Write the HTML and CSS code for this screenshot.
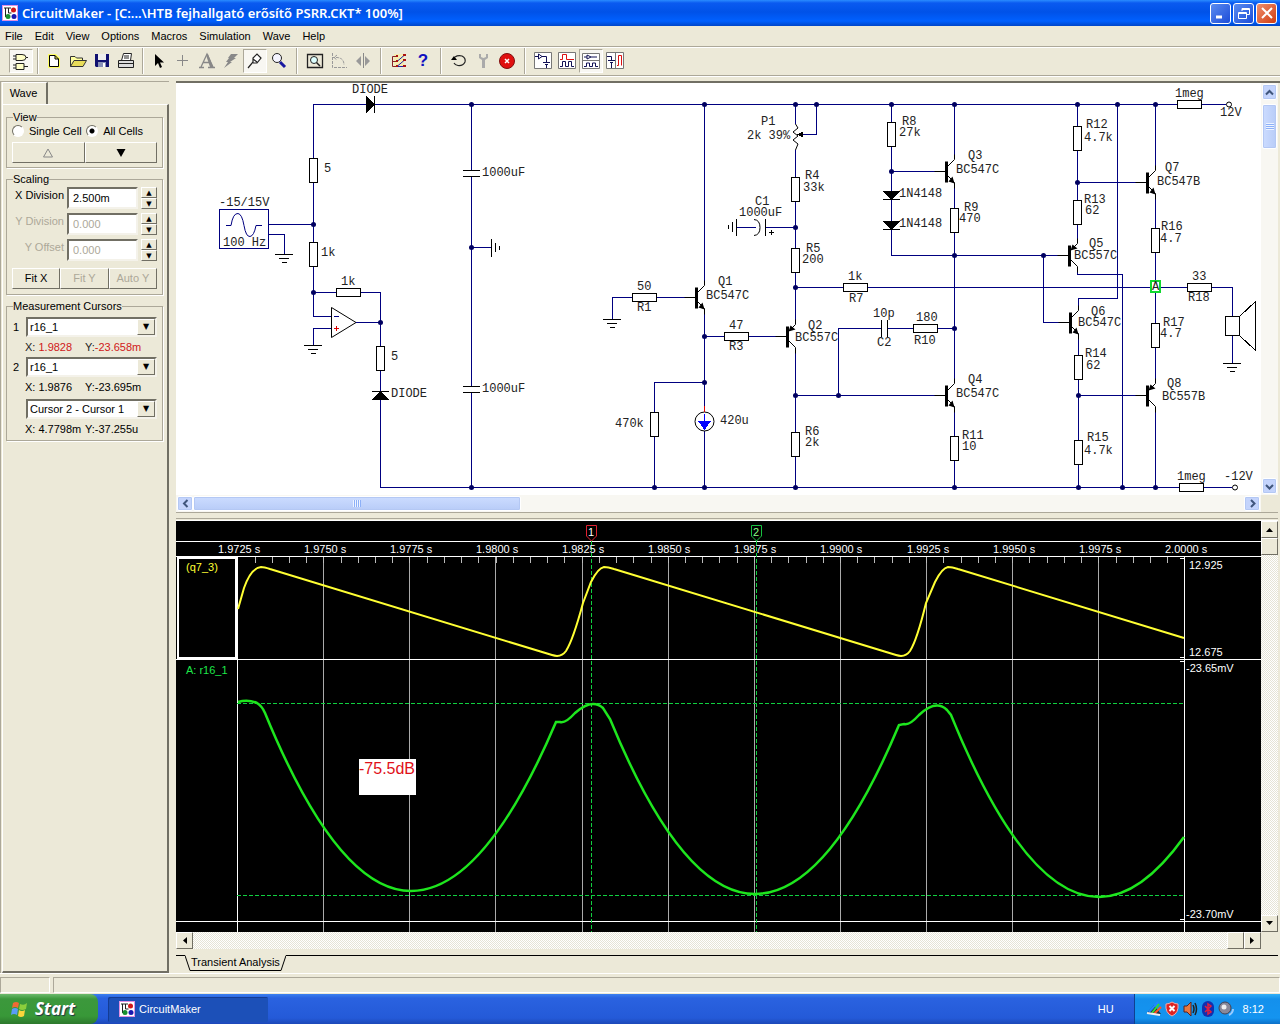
FILE: index.html
```html
<!DOCTYPE html>
<html lang="en">
<head>
<meta charset="utf-8">
<title>CircuitMaker</title>
<link rel="stylesheet" href="styles.css">
</head>
<body>
<svg class="defs" width="0" height="0" aria-hidden="true">
  <defs>
    <g id="rv"><rect x="-4" y="0" width="8" height="24" fill="#fff" stroke="#000"/></g>
    <g id="rh"><rect x="0" y="-4" width="24" height="8" fill="#fff" stroke="#000"/></g>
    <g id="gnd" stroke="#000"><path d="M-9 0H9M-5 4H5M-2 8H3"/></g>
    <g id="npn"><path d="M0-10V11" stroke="#000" stroke-width="3"/><path d="M-12 0H0M8-17V-12L1-5M1 4L8 11V17" stroke="#000" fill="none"/><path d="M8 12L2 10L6 5Z"/></g>
    <g id="pnp"><path d="M0-10V11" stroke="#000" stroke-width="3"/><path d="M-12 0H0M8-17V-12L1-5M1 4L8 11V17" stroke="#000" fill="none"/><path d="M1-5L3-11L8-7Z"/></g>
    <circle id="dot" r="2.5" fill="#000060" shape-rendering="auto"/>
    <g id="app">
      <rect width="16" height="16" fill="#fff"/><rect x=".5" y=".5" width="15" height="15" fill="none" stroke="#e090e0"/>
      <path d="M2 3H9M3.500 3V12M6.500 3V8H9.500" stroke="#222" fill="none"/>
      <circle cx="11.500" cy="5" r="2.500" fill="#d01818"/><circle cx="12" cy="11.500" r="2.500" fill="#1818b0"/><circle cx="6" cy="11.500" r="2.500" fill="#189030"/>
    </g>
  </defs>
</svg>

<header class="titlebar">
  <svg width="16" height="16"><use href="#app"/></svg>
  <h1>CircuitMaker - [C:...\HTB fejhallgató erősítő PSRR.CKT* 100%]</h1>
  <button class="cap" aria-label="Minimize"><svg width="18" height="18"><path d="M4 13H10" stroke="#fff" stroke-width="3"/></svg></button>
  <button class="cap" aria-label="Restore"><svg width="18" height="18"><path d="M7 7V4.500H14.500V10.500H12M3.500 8.500H11.500V14.500H3.500ZM3.500 9.500H11.500M7 5.500H14" stroke="#fff" fill="none"/></svg></button>
  <button class="cap close" aria-label="Close"><svg width="18" height="18"><path d="M4 4L14 14M14 4L4 14" stroke="#fff" stroke-width="2"/></svg></button>
</header>

<nav class="menubar">
  <button>File</button><button>Edit</button><button>View</button><button>Options</button><button>Macros</button><button>Simulation</button><button>Wave</button><button>Help</button>
</nav>

<div class="toolbar">
  <button class="on" aria-label="Parts"><svg width="22" height="22"><path d="M6 4.500H12Q16 4.500 16 7.500T12 10.500H6ZM3 6H6M3 9H6M16 7.500H18" fill="#ffffc8" stroke="#222"/><path d="M6 13.500H14V19.500H6ZM3 15H6M3 18H6M14 16.500H18" fill="#ffffc8" stroke="#222"/></svg></button>
  <span class="sep"></span>
  <button aria-label="New"><svg width="22" height="22"><path d="M5 4H13L17 8V18H5Z" fill="#ff6"/><path d="M6.500 5.500H12L15.500 9V16.500H6.500ZM12 5.500V9H15.500" fill="#fff" stroke="#000"/></svg></button>
  <button aria-label="Open"><svg width="22" height="22"><path d="M3.500 16.500V6.500H8L9.500 8H15.500V10.500" fill="#ffffa0" stroke="#333"/><path d="M3.500 16.500L7 10.500H19.500L16 16.500Z" fill="#e8dc58" stroke="#333"/></svg></button>
  <button aria-label="Save"><svg width="22" height="22"><path d="M4 4H18V17H5L4 16Z" fill="#101070"/><path d="M7 4H15V10H7Z" fill="#eee"/><path d="M7 12H15V17H7Z" fill="#8890b8"/><path d="M12 13H14V17H12Z" fill="#fff"/></svg></button>
  <button aria-label="Print"><svg width="22" height="22"><path d="M6.500 10.500L8.500 3.500H16.500L15.500 10.500M9 6H14M9 8H14" fill="#fff" stroke="#222"/><path d="M3.500 10.500H18.500V17.500H3.500ZM3.500 13.500H18.500" fill="#ddd" stroke="#222"/></svg></button>
  <span class="sep"></span>
  <button aria-label="Arrow"><svg width="22" height="22"><path d="M7 4V16L10 13L12 18L14 17L12 12.500H16Z"/></svg></button>
  <button aria-label="Wire"><svg width="22" height="22"><path d="M10.500 5V16M5 10.500H16" stroke="#888"/></svg></button>
  <button aria-label="Text"><svg width="22" height="22"><path d="M3 17.500H8M12 17.500H19M5 17L11 4L17 17M7 12.500H14" stroke="#888" stroke-width="1.300" fill="none"/><path d="M10 5L12 4L17 17H14Z" fill="#888"/></svg></button>
  <button aria-label="Delete"><svg width="22" height="22"><path d="M11 4H18L14 8H16L10 12H12L4 18L8 12H6L9 8H8Z" fill="#888"/></svg></button>
  <button class="on" aria-label="Probe"><svg width="22" height="22"><path d="M4 18L9 12V8L13 4L17 8L13 13H9M9 9L13 12" fill="#fff" stroke="#222" stroke-width="1.200"/></svg></button>
  <button aria-label="Zoom"><svg width="22" height="22"><circle cx="9" cy="8" r="4.500" fill="#f4f4ff" stroke="#222"/><path d="M12 12L17 17" stroke="#1818a0" stroke-width="3"/></svg></button>
  <span class="sep wide"></span>
  <button aria-label="Fit"><svg width="22" height="22"><path d="M3.500 4.500H18.500V17.500H3.500Z" fill="none" stroke="#222" stroke-width="1.300"/><circle cx="10" cy="10" r="3.500" fill="#dff" stroke="#222"/><path d="M12.500 12.500L16 16" stroke="#222" stroke-width="1.500"/></svg></button>
  <button aria-label="Rotate"><svg width="22" height="22"><path d="M4.500 3V17.500H19M4 7.500H9Q16 8 16 15M9 5L6 7.500L9 10" fill="none" stroke="#999" stroke-dasharray="3 1"/></svg></button>
  <button aria-label="Mirror"><svg width="22" height="22"><path d="M9 6V16L4 11ZM13 6V16L18 11Z" fill="#999"/><path d="M11.500 3V18" stroke="#888"/></svg></button>
  <span class="sep wide"></span>
  <button aria-label="Digital options"><svg width="22" height="22"><path d="M6 4H16V17H6Z" fill="#f5ecb0"/><path d="M9 6.500H4.500V16.500H9M4 11.500H9" fill="none" stroke="#822"/><path d="M9 11.500L16 5.500M9 16.500L16 10.500M10 16.500H17" stroke="#22a"/><path d="M15 4H18V6H15ZM15 9H18V11H15ZM15 15H18V17H15ZM8 5H10V7H8ZM8 10H10V12H8ZM8 15H10V17H8Z" fill="#a11"/></svg></button>
  <button class="help" aria-label="Help">?</button>
  <span class="sep wide"></span>
  <button aria-label="Reset"><svg width="22" height="22"><path d="M7 7Q10 5 14 6Q18 8 17 12Q15 16 10 15.500Q7 15 6 13" fill="none" stroke="#222" stroke-width="1.200"/><path d="M3 10L9 10L6 6Z"/></svg></button>
  <button aria-label="Tools"><svg width="22" height="22"><path d="M7 4V8L10 10V18H13V10L16 8V4H14V7L11.500 8L9 7V4Z" fill="#aaa"/></svg></button>
  <button aria-label="Stop"><svg width="22" height="22"><circle cx="11" cy="11" r="7.500" fill="#e01010" stroke="#801010"/><path d="M9 9L13 13M13 9L9 13" stroke="#fff" stroke-width="1.500"/></svg></button>
  <span class="sep wide"></span>
  <button aria-label="Schematic view"><svg width="22" height="22"><path d="M2.500 2.500H19.500V18.500H2.500Z" fill="#fff" stroke="#777"/><path d="M3 6.500H6.500M6.500 4V9L10 6.500ZM10 6.500H14.500V12M11 12.500H18M13 14.500H16M14.500 15V18" fill="none" stroke="#115"/></svg></button>
  <button aria-label="Wave view"><svg width="22" height="22"><path d="M2.500 2.500H19.500V18.500H2.500Z" fill="#fff" stroke="#777"/><path d="M4 9.500H6.500V4.500H10.500V9.500H18" fill="none" stroke="#d11"/><path d="M4 16.500H6.500V11.500H9.500V16.500H12.500V11.500H15.500V16.500H18" fill="none" stroke="#115"/></svg></button>
  <button class="on" aria-label="Split horizontally"><svg width="22" height="22"><path d="M2.500 3.500H19.500V18.500H2.500ZM3 10.500H19" fill="#fff" stroke="#777"/><path d="M4 7H7M7 5V9L11 7ZM11 7H17M4 16.500H6.500V13H9.500V16.500H12.500V13H15.500V16.500H18" fill="none" stroke="#115"/></svg></button>
  <button aria-label="Split vertically"><svg width="22" height="22"><path d="M2.500 2.500H19.500V18.500H2.500ZM11.500 3V18" fill="#fff" stroke="#777"/><path d="M3 6.500H7.500V10M4 10.500H11M6 12.500H9M7.500 13V18" fill="none" stroke="#115"/><path d="M13 15.500H14.500V5.500H17.500V15.500" fill="none" stroke="#d11"/></svg></button>
</div>

<main class="workspace">
  <aside class="side">
    <button class="sidetab">Wave</button>
    <div class="panel">
      <fieldset>
        <legend>View</legend>
        <div class="radios">
          <label><input type="radio" name="cells">Single Cell</label>
          <label><input type="radio" name="cells" checked>All Cells</label>
        </div>
        <div class="pair">
          <button class="btn" aria-label="Up"><svg width="12" height="10"><path d="M1.500 9H10.500L6 1Z" fill="none" stroke="#888"/></svg></button>
          <button class="btn" aria-label="Down"><svg width="12" height="10"><path d="M1.500 1H10.500L6 9Z"/></svg></button>
        </div>
      </fieldset>
      <fieldset class="scaling">
        <legend>Scaling</legend>
        <div class="field"><label for="xd">X Division</label><input id="xd" value="2.500m"><span class="spin"><button aria-label="More">▲</button><button aria-label="Less">▼</button></span></div>
        <div class="field off"><label for="yd">Y Division</label><input id="yd" value="0.000" disabled><span class="spin"><button aria-label="More">▲</button><button aria-label="Less">▼</button></span></div>
        <div class="field off"><label for="yo">Y Offset</label><input id="yo" value="0.000" disabled><span class="spin"><button aria-label="More">▲</button><button aria-label="Less">▼</button></span></div>
        <div class="pair"><button class="btn">Fit X</button><button class="btn" disabled>Fit Y</button><button class="btn" disabled>Auto Y</button></div>
      </fieldset>
      <fieldset class="cursors">
        <legend>Measurement Cursors</legend>
        <label for="c1">1</label><span class="drop"><select id="c1"><option>r16_1</option></select></span>
        <p class="red"><span><i>X:</i> 1.9828</span><span><i>Y:</i>-23.658m</span></p>
        <label for="c2">2</label><span class="drop"><select id="c2"><option>r16_1</option></select></span>
        <p><span>X: 1.9876</span><span>Y:-23.695m</span></p>
        <span class="drop diff"><select aria-label="Difference"><option>Cursor 2 - Cursor 1</option></select></span>
        <p><span>X: 4.7798m</span><span>Y:-37.255u</span></p>
      </fieldset>
    </div>
  </aside>

  <section class="docs">
    <div class="schem">
      <svg class="sheet" width="1085" height="412" viewBox="176 83 1085 412" shape-rendering="crispEdges">
        <g class="wire">
          <path d="M313.500 158V104.500H366M375 104.500H1177M1202 104.500H1226M313.500 183V242M313.500 267V316.500H331M331 328.500H313.500V345M268 224.500H313M268 234.500H284.500V254M313 292.500H336M361 292.500H380.500V346M356 322.500H380M380.500 371V391M380.500 400V487.500H1179M1204 487.500H1232"/>
          <path d="M471.500 104V170M471.500 177V386M471.500 393V487M471 247.500H491"/>
          <path d="M704.500 104V281M632 297.500H612.500V319M657 297.500H686M704.500 314V412M704 336.500H724M749 336.500H776M704 382.500H654.500V412M654.500 437V487M704.500 431V487"/>
          <path d="M795.500 104V124M816.500 104V134.500H802M795.500 150V177M795.500 202V248M795 227.500H766M736 227.500H756M795.500 273V320M795.500 353V432M795.500 457V487M795 287.500H843M868 287.500H1187M1212 287.500H1232.500V316M1232.500 336V363M795 395.500H936M838.500 395V328.500H881M888 328.500H913M938 328.500H954"/>
          <path d="M891.500 104V122M891.500 147V191M891.500 200V221M891.500 230V255.500H1058M891 171.500H936M954.500 104V155M954.500 188V208M954.500 233V379M954.500 412V436M954.500 461V487"/>
          <path d="M1043.500 255V322.500H1060M1077.500 104V126M1077.500 151V200M1077.500 225V239M1077.500 272V274.500H1122.500V487M1077 182.500H1136M1078.500 306V298.500H1117.500V104M1078.500 339V355M1078.500 380V440M1078.500 465V487M1078 395.500H1136"/>
          <path d="M1155.500 104V166M1155.500 199V228M1155.500 253V323M1155.500 348V379M1155.500 412V487"/>
          <path d="M219.500 209.500H268.500V248.500H219.500Z"/>
          <path shape-rendering="auto" d="M226 225.500H231Q233 213 238 213.500Q242 214 244 225.500T250 236.500Q254 236 256 225.500H262"/>
          <path d="M334 316.500H339"/>
        </g>
        <g stroke="#000" fill="none">
          <path d="M463 170.500H480M463 176.500H480M463 386.500H480M463 392.500H480M491.500 239V257M495.500 243V252M499.500 246V250"/>
          <path d="M736.500 219V236M732.500 222V232M728.500 225V229M765.500 219V236M769 232.500H774M771.500 230V235M881.500 320V337M887.500 320V337"/>
          <path d="M754 219.500Q760 220 760 227.500T754 235.500" shape-rendering="auto"/>
          <path d="M795.500 124L798 128L793 132L798 136L793 140L798 144L795.500 150M331.500 307.500V337.500L356 322.500Z" shape-rendering="auto"/>
          <path d="M374.500 96V113M372 391.500H389M883 199.500H900M883 229.500H900"/>
          <path d="M1225.500 316.500H1239.500V335.500H1225.500ZM1239.500 316.500L1255.500 301.500V350.500L1239.500 335.500"/>
          <path d="M686 297.500H696M776 336.500H787" />
          <circle cx="1229" cy="104.500" r="2.500" fill="#fff" shape-rendering="auto"/><circle cx="1235" cy="487.500" r="2.500" fill="#fff" shape-rendering="auto"/>
          <circle cx="704.500" cy="421.500" r="9.500" fill="#fff" shape-rendering="auto"/>
        </g>
        <path d="M366 96V113L375 104.500ZM372 400H389L380.500 391ZM883 191H900L891.500 200ZM883 221H900L891.500 230ZM797 134.500L803 131.500V137.500Z"/>
        <path d="M698 421H711L704.500 430Z" fill="#00f"/><path d="M704.500 414V422" stroke="#00f"/><path d="M704.500 406V412M334 328.500H339M336.500 326V331" stroke="#d00"/>
        <use href="#rv" x="313.500" y="158.500"/><use href="#rv" x="313.500" y="242.500"/><use href="#rv" x="380.500" y="346.500"/><use href="#rv" x="654.500" y="412.500"/><use href="#rv" x="795.500" y="177.500"/><use href="#rv" x="795.500" y="248.500"/><use href="#rv" x="795.500" y="432.500"/><use href="#rv" x="891.500" y="122.500"/><use href="#rv" x="954.500" y="208.500"/><use href="#rv" x="954.500" y="436.500"/><use href="#rv" x="1077.500" y="126.500"/><use href="#rv" x="1077.500" y="200.500"/><use href="#rv" x="1078.500" y="355.500"/><use href="#rv" x="1078.500" y="440.500"/><use href="#rv" x="1155.500" y="228.500"/><use href="#rv" x="1155.500" y="323.500"/>
        <use href="#rh" x="336.500" y="292.500"/><use href="#rh" x="632.500" y="297.500"/><use href="#rh" x="724.500" y="336.500"/><use href="#rh" x="843.500" y="287.500"/><use href="#rh" x="913.500" y="328.500"/><use href="#rh" x="1177.500" y="104.500"/><use href="#rh" x="1179.500" y="487.500"/><use href="#rh" x="1187.500" y="287.500"/>
        <use href="#gnd" x="284" y="254.500"/><use href="#gnd" x="313" y="345.500"/><use href="#gnd" x="612" y="319.500"/><use href="#gnd" x="1232" y="363.500"/>
        <g shape-rendering="auto">
          <use href="#npn" x="696.500" y="297.500"/><use href="#pnp" x="787.500" y="336.500"/><use href="#npn" x="946.500" y="171.500"/><use href="#npn" x="946.500" y="395.500"/><use href="#pnp" x="1069.500" y="255.500"/><use href="#npn" x="1070.500" y="322.500"/><use href="#npn" x="1147.500" y="182.500"/><use href="#pnp" x="1147.500" y="395.500"/>
        </g>
        <use href="#dot" x="313.500" y="224.500"/><use href="#dot" x="313.500" y="292.500"/><use href="#dot" x="380.500" y="322.500"/><use href="#dot" x="471.500" y="104.500"/><use href="#dot" x="471.500" y="247.500"/><use href="#dot" x="471.500" y="487.500"/><use href="#dot" x="704.500" y="104.500"/><use href="#dot" x="795.500" y="104.500"/><use href="#dot" x="816.500" y="104.500"/><use href="#dot" x="891.500" y="104.500"/><use href="#dot" x="954.500" y="104.500"/><use href="#dot" x="1077.500" y="104.500"/><use href="#dot" x="1117.500" y="104.500"/><use href="#dot" x="1155.500" y="104.500"/><use href="#dot" x="704.500" y="336.500"/><use href="#dot" x="704.500" y="382.500"/><use href="#dot" x="654.500" y="487.500"/><use href="#dot" x="704.500" y="487.500"/><use href="#dot" x="795.500" y="487.500"/><use href="#dot" x="954.500" y="487.500"/><use href="#dot" x="1078.500" y="487.500"/><use href="#dot" x="1122.500" y="487.500"/><use href="#dot" x="1155.500" y="487.500"/><use href="#dot" x="795.500" y="227.500"/><use href="#dot" x="795.500" y="287.500"/><use href="#dot" x="795.500" y="395.500"/><use href="#dot" x="838.500" y="395.500"/><use href="#dot" x="891.500" y="171.500"/><use href="#dot" x="954.500" y="255.500"/><use href="#dot" x="954.500" y="328.500"/><use href="#dot" x="1043.500" y="255.500"/><use href="#dot" x="1077.500" y="182.500"/><use href="#dot" x="1078.500" y="395.500"/>
        <rect x="1151" y="281" width="9" height="11" fill="#fff" stroke="#10d830" stroke-width="2"/>
        <g class="parts">
          <text x="352" y="93">DIODE</text><text x="324" y="172">5</text><text x="219" y="206">-15/15V</text><text x="223" y="246">100 Hz</text><text x="321" y="256">1k</text><text x="341" y="285">1k</text><text x="391" y="360">5</text><text x="391" y="397">DIODE</text><text x="482" y="176">1000uF</text><text x="482" y="392">1000uF</text>
          <text x="637" y="290">50</text><text x="637" y="311">R1</text><text x="718" y="285">Q1</text><text x="706" y="299">BC547C</text><text x="729" y="329">47</text><text x="729" y="350">R3</text><text x="615" y="427">470k</text><text x="720" y="424">420u</text>
          <text x="761" y="125">P1</text><text x="747" y="139">2k 39%</text><text x="805" y="179">R4</text><text x="803" y="191">33k</text><text x="755" y="205">C1</text><text x="739" y="216">1000uF</text><text x="806" y="252">R5</text><text x="802" y="263">200</text><text x="848" y="280">1k</text><text x="849" y="302">R7</text><text x="808" y="329">Q2</text><text x="795" y="341">BC557C</text><text x="873" y="317">10p</text><text x="877" y="346">C2</text><text x="805" y="435">R6</text><text x="805" y="446">2k</text>
          <text x="902" y="125">R8</text><text x="899" y="136">27k</text><text x="899" y="197">1N4148</text><text x="899" y="227">1N4148</text><text x="916" y="321">180</text><text x="914" y="344">R10</text><text x="968" y="159">Q3</text><text x="956" y="173">BC547C</text><text x="964" y="211">R9</text><text x="959" y="222">470</text><text x="968" y="383">Q4</text><text x="956" y="397">BC547C</text><text x="962" y="439">R11</text><text x="962" y="450">10</text>
          <text x="1086" y="128">R12</text><text x="1084" y="141">4.7k</text><text x="1084" y="203">R13</text><text x="1085" y="214">62</text><text x="1089" y="247">Q5</text><text x="1074" y="259">BC557C</text><text x="1091" y="315">Q6</text><text x="1078" y="326">BC547C</text><text x="1085" y="357">R14</text><text x="1086" y="369">62</text><text x="1087" y="441">R15</text><text x="1084" y="454">4.7k</text>
          <text x="1165" y="171">Q7</text><text x="1157" y="185">BC547B</text><text x="1161" y="230">R16</text><text x="1160" y="242">4.7</text><text x="1163" y="326">R17</text><text x="1160" y="337">4.7</text><text x="1167" y="387">Q8</text><text x="1162" y="400">BC557B</text><text x="1175" y="97">1meg</text><text x="1220" y="116">12V</text><text x="1177" y="480">1meg</text><text x="1224" y="480">-12V</text><text x="1192" y="280">33</text><text x="1188" y="301">R18</text><text x="1152" y="290">A</text>
        </g>
      </svg>
      <div class="xp vert">
        <button aria-label="Scroll up"><svg width="11" height="11"><path d="M2 7.500L5.500 4L9 7.500" class="chev"/></svg></button>
        <span class="thumb"></span>
        <button class="end" aria-label="Scroll down"><svg width="11" height="11"><path d="M2 4L5.500 7.500L9 4" class="chev"/></svg></button>
      </div>
      <div class="xp horz">
        <button aria-label="Scroll left"><svg width="11" height="11"><path d="M7.500 2L4 5.500L7.500 9" class="chev"/></svg></button>
        <span class="thumb"></span>
        <button class="end" aria-label="Scroll right"><svg width="11" height="11"><path d="M4 2L7.500 5.500L4 9" class="chev"/></svg></button>
      </div>
      <span class="corner"></span>
    </div>

    <div class="wave">
      <div class="plot">
      <svg width="1085" height="411" viewBox="176 521 1085 411" shape-rendering="crispEdges">
        <path d="M323.500 557V932M409.500 557V932M495.500 557V932M582.500 557V932M668.500 557V932M754.500 557V932M840.500 557V932M926.500 557V932M1012.500 557V932M1098.500 557V932" stroke="#aaa"/>
        <path d="M254.500 560H1184" stroke="#bbb" stroke-width="6" stroke-dasharray="1 16.220"/>
        <path d="M176 541.500H1261M176 556.500H1261M176 659.500H1261M176 921.500H1261M237.500 556V932M1184.500 556V932M1180 558.500H1184M1180 657.500H1184M1180 661.500H1184M1180 919.500H1184" stroke="#fff"/>
        <rect x="178" y="558" width="58" height="100" fill="none" stroke="#fff" stroke-width="2"/>
        <path d="M237 703.500H1184M237 895.500H1184M591.500 541V932M756.500 541V932" stroke="#10d040" stroke-dasharray="4 2"/>
        <g fill="none" stroke-width="2" shape-rendering="auto">
          <path stroke="#ff3" d="M238 609L244 588Q251 568 261 567Q264 567 270 569L552 655Q561 658 566 651Q573 640 583 603L591 582Q598 568 604 567Q608 567 614 569L896 655Q905 658 910 651Q917 640 926 603L935 582Q942 568 948 567Q952 567 958 569L1184 638"/>
          <path stroke="#1ee61e" stroke-width="2.500" d="M238 702Q248 699 257 703Q262 706 265 713Q338 891 411 891Q484 891 556 722L560 722Q565 724 575 713Q592 698 603 708L610 719Q682 894 755 894Q828 894 899 725L904 724Q909 726 919 715Q936 699 947 710L951 715Q1025 897 1099 897Q1141 897 1184 837"/>
        </g>
        <g shape-rendering="auto" fill="#000"><path d="M586.500 525.500H596.500V536L591.500 541L586.500 536Z" stroke="#e02030"/><path d="M751.500 525.500H761.500V536L756.500 541L751.500 536Z" stroke="#18c040"/></g>
        <g class="scale" fill="#fff">
          <text x="588" y="536">1</text><text x="753" y="536" fill="#8f8">2</text>
          <text x="218" y="553">1.9725 s</text><text x="304" y="553">1.9750 s</text><text x="390" y="553">1.9775 s</text><text x="476" y="553">1.9800 s</text><text x="562" y="553">1.9825 s</text><text x="648" y="553">1.9850 s</text><text x="734" y="553">1.9875 s</text><text x="820" y="553">1.9900 s</text><text x="907" y="553">1.9925 s</text><text x="993" y="553">1.9950 s</text><text x="1079" y="553">1.9975 s</text><text x="1165" y="553">2.0000 s</text>
          <text x="1189" y="569">12.925</text><text x="1189" y="656">12.675</text><text x="1186" y="672">-23.65mV</text><text x="1186" y="918">-23.70mV</text>
          <text x="186" y="571" fill="#ff3">(q7_3)</text><text x="186" y="674" fill="#1ee64a">A: r16_1</text>
        </g>
        <rect x="359" y="759" width="57" height="36" fill="#fff"/><text x="359" y="774" class="note">-75.5dB</text>
      </svg>
      </div>
      <div class="old vert"><button aria-label="Scroll up"><svg width="9" height="5"><path d="M1 5H8L4.500 1Z"/></svg></button><span class="thumb"></span><button class="end" aria-label="Scroll down"><svg width="9" height="5"><path d="M1 0H8L4.500 4Z"/></svg></button></div>
      <div class="old horz"><button aria-label="Scroll left"><svg width="5" height="9"><path d="M5 1V8L1 4.500Z"/></svg></button><span class="thumb end"></span><button aria-label="Scroll right"><svg width="5" height="9"><path d="M0 1V8L4 4.500Z"/></svg></button></div>
      <span class="corner"></span>
    </div>
    <div class="sheets">
      <span class="lead"></span>
      <svg width="6" height="16"><path d="M0 .5L5 15.500H6" class="edge"/></svg>
      <button>Transient Analysis</button>
      <svg width="6" height="16"><path d="M0 15.500H1L6 .5" class="edge"/></svg>
      <span class="rest"></span>
    </div>
  </section>
</main>

<footer class="status"><span class="cell"></span><span class="cell grow"></span></footer>

<div class="taskbar">
  <button class="start"><svg width="20" height="20"><path d="M3 4Q6 2 9 4L8 9Q5 7 2 9Z" fill="#f06a35"/><path d="M10 5Q14 7 17 4L16 10Q12 12 9 10Z" fill="#8ccf3c"/><path d="M2 10Q5 8 8 10L7 16Q4 14 1 16Z" fill="#5a9cf8"/><path d="M9 11Q12 13 15 11L14 17Q11 19 8 17Z" fill="#fcd53c"/></svg>Start</button>
  <button class="task"><svg width="16" height="16"><use href="#app"/></svg>CircuitMaker</button>
  <span class="lang">HU</span>
  <div class="tray">
    <svg width="16" height="16"><path d="M1 12L8 4L15 13H3Z" fill="#234"/><path d="M3 11L12 1" stroke="#28f" stroke-width="2"/><path d="M6 12L13 3" stroke="#3d3" stroke-width="2"/><path d="M8 13L15 6" stroke="#f52" stroke-width="2"/><path d="M1 12L14 14" stroke="#eee" stroke-width="2"/></svg>
    <svg width="16" height="16"><path d="M8 1Q11 3 14 3Q15 12 8 15Q1 12 2 3Q5 3 8 1Z" fill="#d22" stroke="#eaa"/><path d="M5.500 5L10.500 10M10.500 5L5.500 10" stroke="#fff" stroke-width="2"/></svg>
    <svg width="16" height="16"><path d="M2 5H5L9 1V15L5 11H2Z" fill="#e87840" stroke="#522"/><path d="M11 4Q13 8 11 12M13 2Q16 8 13 14" fill="none" stroke="#222" stroke-width="1.500"/></svg>
    <svg width="16" height="16"><rect x="2" y="0" width="12" height="16" rx="6" fill="#1030b0"/><path d="M5 5L11 11L8 13V3L11 5L5 11" fill="none" stroke="#e02040" stroke-width="1.500"/></svg>
    <svg width="16" height="16"><circle cx="7" cy="7" r="6" fill="#889" stroke="#445"/><circle cx="6" cy="6" r="2.500" fill="#eee"/><path d="M11 14Q15 12 15 8" fill="none" stroke="#9cf" stroke-width="2"/></svg>
    <time>8:12</time>
  </div>
</div>
</body>
</html>
```
FILE: styles.css
```css
* { box-sizing: border-box; }
body {
  margin: 0;
  min-height: 100vh;
  display: flex;
  flex-direction: column;
  background: #ece9d8;
  color: #000;
  font: 11px/13px "Liberation Sans", Arial, sans-serif;
}
button, input, select { font: inherit; color: inherit; margin: 0; padding: 0; border-radius: 0; }
button { border: 0; background: none; }
svg { display: block; flex: none; }
.defs { position: absolute; }

/* title bar */
.titlebar {
  height: 26px;
  display: flex;
  align-items: center;
  gap: 2px;
  padding: 0 3px 0 2px;
  background: linear-gradient(#2a8cff 0, #0a5af0 3px, #0052e8 12px, #0060ff 21px, #0046c8 26px);
}
.titlebar h1 {
  flex: 1;
  margin: 0 0 0 2px;
  color: #fff;
  font: 600 13px/20px "Noto Sans", "Open Sans", sans-serif;
  white-space: nowrap;
}
.cap {
  width: 21px;
  height: 21px;
  display: grid;
  place-items: center;
  border: 1px solid #fff;
  border-radius: 3px;
  background: linear-gradient(135deg, #5a8cf0, #1c4cd8);
}
.cap.close { background: linear-gradient(135deg, #f09070, #d03c10); }

/* menus and tools */
.menubar { height: 20px; display: flex; align-items: center; gap: 12px; padding-left: 5px; }
.toolbar {
  height: 30px;
  display: flex;
  align-items: center;
  padding-left: 9px;
  border-top: 1px solid #aca899;
  border-bottom: 1px solid #aca899;
  box-shadow: inset 0 1px #fff, 0 1px #fff;
}
.toolbar button { width: 24px; height: 24px; display: grid; place-items: center; }
.toolbar .on { background: #f8f7f2; border: 1px solid; border-color: #aca899 #fff #fff #aca899; }
.toolbar .help { font: bold 17px/22px "Liberation Sans", Arial, sans-serif; color: #1010c0; }
.sep { width: 2px; height: 26px; margin: 0 3px 0 4px; border-left: 1px solid #aca899; border-right: 1px solid #fff; }
.sep.wide { margin: 0 5px; }

/* main area */
.workspace { flex: 1; display: flex; gap: 7px; padding-top: 5px; }
.side {
  flex: 0 0 169px;
  display: flex;
  flex-direction: column;
  align-items: flex-start;
  padding-left: 1px;
  border-top: 1px solid #aca899;
  border-left: 1px solid #aca899;
}
.sidetab { width: 46px; height: 22px; padding-right: 2px; border: 1px solid #fff; border-right: 2px solid #716f64; border-bottom: 0; }
.panel {
  flex: 1;
  align-self: stretch;
  display: flex;
  flex-direction: column;
  gap: 5px;
  padding: 6px 4px 0 3px;
  border: solid;
  border-width: 1px 2px 2px 1px;
  border-color: #fff #716f64 #716f64 #fff;
}
fieldset { min-width: 0; margin: 0; padding: 0 5px 4px; border: 1px solid #aca899; box-shadow: 1px 1px #fff; }
legend { margin-left: 1px; padding: 0; line-height: 12px; }
.radios { display: flex; justify-content: space-between; padding: 1px 14px 4px 0; }
.radios label { display: flex; align-items: center; gap: 5px; height: 14px; white-space: nowrap; }
.radios input { appearance: none; width: 12px; height: 12px; border: 1px solid; border-color: #716f64 #fff #fff #716f64; border-radius: 50%; background: #fff; }
.radios input:checked { background: radial-gradient(#000 2px, #fff 3px); }
.pair { display: flex; }
.btn {
  flex: 1;
  height: 21px;
  display: grid;
  place-items: center;
  border: 1px solid;
  border-color: #fff #716f64 #716f64 #fff;
}
.btn:disabled { color: #aca899; }
.field { display: flex; gap: 3px; height: 22px; margin-bottom: 4px; }
.field label { flex: 1; text-align: right; line-height: 17px; white-space: nowrap; }
.field input { width: 71px; padding: 0 4px; border: 2px solid; border-color: #716f64 #f4f2ea #f4f2ea #716f64; background: #fff; }
.off label, .off input { color: #aca899; }
.spin { width: 16px; display: flex; flex-direction: column; }
.spin button { flex: 1; border: 1px solid; border-color: #fff #716f64 #716f64 #fff; font: 7px/8px "DejaVu Sans", sans-serif; }
.scaling { padding-top: 2px; padding-bottom: 5px; }
.scaling .pair { margin-top: 7px; }
.cursors {
  display: grid;
  grid-template-columns: 13px 1fr;
  align-items: center;
  row-gap: 3px;
  padding-top: 5px;
}
.cursors > label { padding-left: 1px; }
.cursors p { grid-column: 2; display: flex; width: 120px; margin: 0; height: 14px; line-height: 14px; }
.cursors p span:first-child { flex: 0 0 60px; white-space: nowrap; }
.cursors i { font-style: normal; color: #222; }
.red { color: #d01818; }
.drop { grid-column: 2; display: grid; margin-left: 1px; border: 2px solid; border-color: #716f64 #f4f2ea #f4f2ea #716f64; background: #fff; }
.drop select { grid-area: 1 / 1; appearance: none; height: 16px; padding: 0 2px; border: 0; background: none; }
.drop::after {
  grid-area: 1 / 1;
  justify-self: end;
  width: 16px;
  content: "▼";
  border: 1px solid;
  border-color: #fff #716f64 #716f64 #fff;
  background: #ece9d8;
  font: 8px/14px "DejaVu Sans", sans-serif;
  text-align: center;
  pointer-events: none;
}
.diff { margin-top: 2px; }

.docs { flex: 1; min-width: 0; display: flex; flex-direction: column; border-top: 2px solid #716f64; padding-right: 2px; }
.schem, .wave { display: grid; grid-template-columns: minmax(0, 1fr) 17px; }
.schem { grid-template-rows: 412px 17px; background: #fff; }
.sheet { overflow: hidden; }
.wire { fill: none; stroke: #000080; }
.parts { font: 12px "Liberation Mono", "Courier New", monospace; fill: #222; }
.corner { background: #ece9d8; }
.xp, .old { display: flex; }
.vert { flex-direction: column; }
.xp { background: #f8f7f2; padding: 1px; }
.xp button, .xp .thumb { flex: 0 0 16px; display: grid; place-items: center; border: 1px solid #fff; border-radius: 2px; background: #c4d4fc; box-shadow: inset 0 0 0 1px #b4c8f4; }
.xp .thumb { background: linear-gradient(90deg, #ccdcff, #b8ccf8); }
.xp.vert .thumb { flex-basis: 45px; margin-top: 4px; }
.xp.horz .thumb { flex-basis: 328px; background: linear-gradient(#ccdcff, #b8ccf8); }
.thumb::after { width: 8px; height: 7px; background: repeating-linear-gradient(#eef4ff 0 1px, #8cb0f8 1px 2px); }
.xp .thumb::after { content: ""; }
.horz .thumb::after { background: repeating-linear-gradient(90deg, #eef4ff 0 1px, #8cb0f8 1px 2px); }
.vert .end { margin-top: auto; }
.horz .end { margin-left: auto; }
.chev { fill: none; stroke: #40567c; stroke-width: 2; }

.wave {
  margin-top: 9px;
  grid-template-rows: 411px 17px;
  box-shadow: 0 -1px #fff, 0 -2px #ece9d8, 0 -3px #aca899, 0 -8px #ece9d8, 0 -9px #aca899;
}
.plot { background: #000; overflow: hidden; }
.scale { font: 11px "Liberation Sans", Arial, sans-serif; }
.note { font: 16px "Liberation Sans", Arial, sans-serif; fill: #e01018; }
.old { background: repeating-conic-gradient(#fff 0 25%, #e6e4d6 0 50%) 0 0 / 2px 2px; }
.old button, .old .thumb { flex: 0 0 17px; display: grid; place-items: center; border: 1px solid; border-color: #fff #716f64 #716f64 #fff; background: #ece9d8; }

/* analysis tabs */
.sheets { flex: 1; display: flex; align-items: flex-start; margin-top: 6px; }
.sheets span { border-top: 1px solid #000; }
.lead { width: 9px; }
.rest { flex: 1; }
.edge { fill: none; stroke: #000; }
.sheets button { height: 16px; border-bottom: 1px solid #000; white-space: nowrap; }

/* status bar */
.status { height: 21px; display: flex; gap: 3px; padding: 3px 0 1px; border-top: 1px solid #fff; }
.cell { width: 50px; border: 1px solid; border-color: #aca899 #fff #fff #aca899; }
.grow { flex: 1; }

/* taskbar */
.taskbar {
  height: 30px;
  display: flex;
  align-items: center;
  color: #fff;
  background: linear-gradient(#3c80f0 0, #2a62e0 4px, #245ad8 24px, #1c48b8 30px);
}
.start {
  width: 98px;
  height: 30px;
  display: flex;
  align-items: center;
  gap: 5px;
  padding-left: 10px;
  border-radius: 0 8px 8px 0;
  background: linear-gradient(#6cba6c 0, #3c983c 5px, #389838 22px, #2c782c 30px);
  font: italic bold 17px/24px "Open Sans", "Noto Sans", sans-serif;
  text-shadow: 1px 1px 1px #234;
}
.task {
  width: 160px;
  height: 25px;
  display: flex;
  align-items: center;
  gap: 4px;
  margin-left: 10px;
  padding-left: 11px;
  border-radius: 2px;
  background: #1c50b8;
  box-shadow: inset 1px 1px #143c94;
}
.lang { margin: 0 20px 0 auto; }
.tray {
  height: 30px;
  display: flex;
  align-items: center;
  gap: 2px;
  padding: 0 16px 0 11px;
  border-left: 1px solid #104090;
  background: linear-gradient(#30b0f8 0, #1490ec 5px, #1494f0 24px, #0c70c8 30px);
}
.tray time { margin-left: 7px; }
```
